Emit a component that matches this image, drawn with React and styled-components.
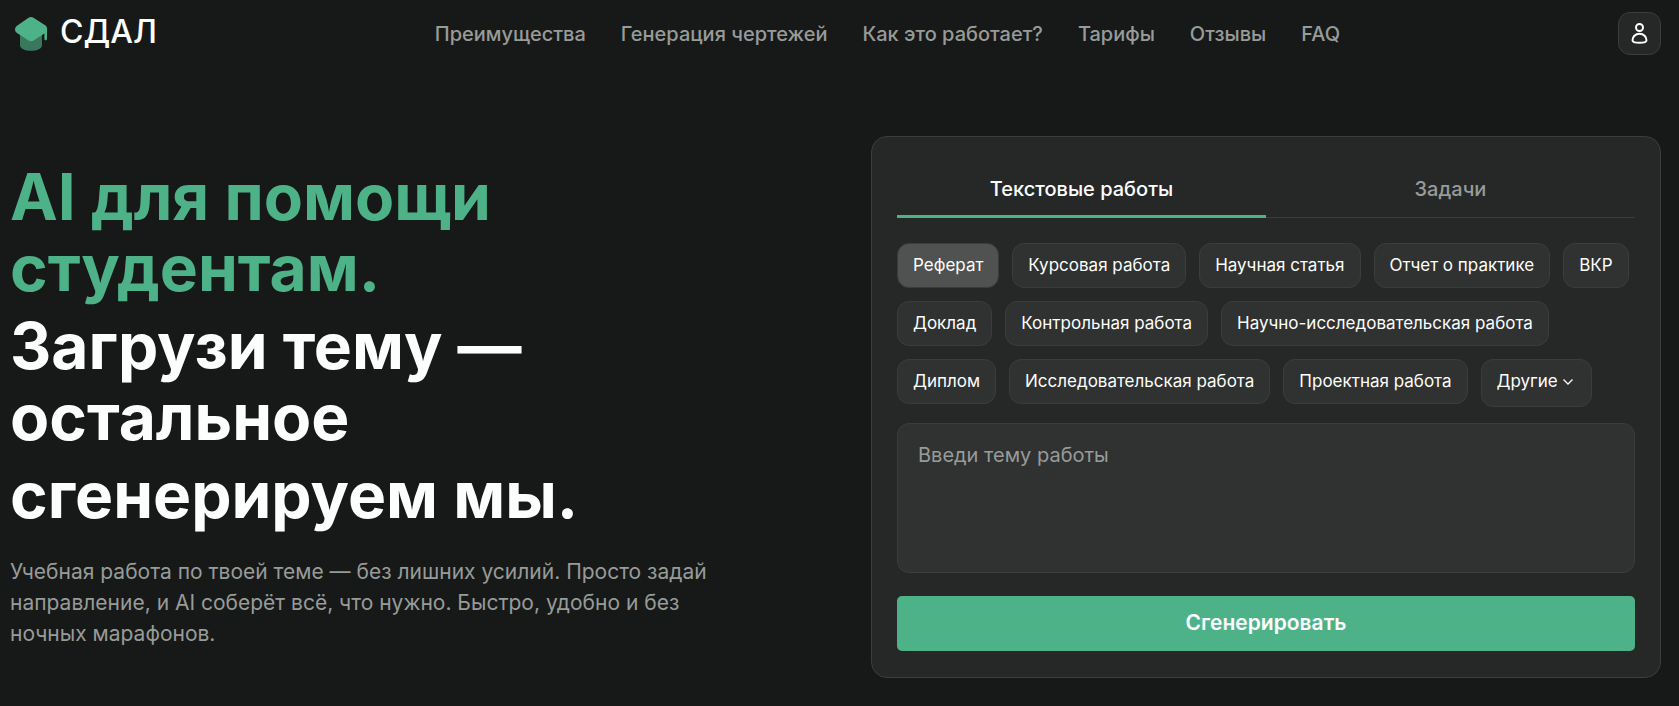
import React, { useState } from "react";
import styled, { createGlobalStyle } from "styled-components";

const GlobalStyle = createGlobalStyle`
  :root {
    --bg: #171918;
    --card: #262827;
    --control: #303231;
    --control-active: #505251;
    --border: #3b3d3c;
    --accent: #4eb289;
    --white: #fcfdfd;
    --muted: #979b99;
  }

  * {
    box-sizing: border-box;
  }

  body {
    margin: 0;
    background: var(--bg);
    color: var(--white);
    font-family: Inter, "Noto Sans", sans-serif;
  }

  button,
  select,
  textarea {
    font-family: inherit;
    color: inherit;
  }
`;

const Page = styled.div`
  padding: 12px 18px 27px 10px;
`;

const Header = styled.header`
  display: flex;
  align-items: center;
  justify-content: space-between;
`;

const Logo = styled.a`
  display: flex;
  align-items: center;
  column-gap: 12px;
  height: 43px;
  padding-left: 5px;
  color: var(--white);
  text-decoration: none;
`;

const LogoName = styled.span`
  align-self: flex-start;
  font-size: 32px;
  font-weight: 500;
  line-height: 40px;
`;

const Nav = styled.nav`
  display: flex;
  column-gap: 35px;
`;

const NavLink = styled.a`
  color: var(--muted);
  font-size: 20px;
  font-weight: 500;
  line-height: 24px;
  text-decoration: none;
`;

const ProfileButton = styled.button`
  display: flex;
  align-items: center;
  justify-content: center;
  width: 43px;
  height: 43px;
  padding: 0;
  border: 1px solid var(--border);
  border-radius: 12px;
  background: var(--card);
  cursor: pointer;
`;

const Hero = styled.main`
  display: grid;
  grid-template-columns: 1fr 790px;
  column-gap: 120px;
  align-items: center;
  padding-top: 81px;

  @media only screen and (max-width: 1200px) {
    grid-template-columns: 1fr;
    row-gap: 40px;
  }
`;

const Intro = styled.section`
  display: flex;
  flex-direction: column;
  row-gap: 26px;
  padding-bottom: 4px;
`;

const Heading = styled.h1`
  display: flex;
  flex-direction: column;
  row-gap: 7px;
  max-width: 600px;
  margin: 0;
  font-size: 64px;
  font-weight: 700;
  line-height: 71px;
`;

const HeadingPart = styled.span`
  color: ${({ $accent }) => ($accent ? "var(--accent)" : "inherit")};
`;

const Lead = styled.p`
  max-width: 730px;
  margin: 0;
  color: var(--muted);
  font-size: 21px;
  line-height: 31px;
`;

const Card = styled.form`
  display: flex;
  flex-direction: column;
  padding: 25px 25px 26px;
  border: 1px solid var(--border);
  border-radius: 16px;
  background: var(--card);
`;

const Tabs = styled.div`
  display: flex;
  margin-bottom: 25px;
  box-shadow: inset 0 -1px var(--border);
`;

const Tab = styled.button`
  flex: 1;
  height: 56px;
  padding: 0 0 2px;
  border: 0;
  border-radius: 2px 2px 0 0;
  background: none;
  box-shadow: ${({ $active }) =>
    $active ? "inset 0 -3px var(--accent)" : "none"};
  color: ${({ $active }) => ($active ? "var(--white)" : "var(--muted)")};
  font-size: 20px;
  font-weight: 500;
  cursor: pointer;
`;

const Chips = styled.div`
  display: flex;
  flex-wrap: wrap;
  align-items: flex-start;
  gap: 13px;
  margin-bottom: 16px;
`;

const Chip = styled.button`
  height: 45px;
  padding: 0 15px 2px;
  border: 1px solid var(--border);
  border-radius: 12px;
  background: ${({ $active }) =>
    $active ? "var(--control-active)" : "var(--control)"};
  font-size: 17px;
  white-space: nowrap;
  cursor: pointer;
`;

const ChipSelect = styled.label`
  display: flex;
  align-items: center;
  column-gap: 3px;
  height: 48px;
  padding: 0 17px 4px 15px;
  border: 1px solid var(--border);
  border-radius: 12px;
  background: var(--control);

  select {
    appearance: none;
    padding: 0;
    border: 0;
    background: none;
    font-size: 17px;
    cursor: pointer;
  }
`;

const Topic = styled.textarea`
  height: 150px;
  margin-bottom: 23px;
  padding: 19px 20px;
  border: 1px solid var(--border);
  border-radius: 12px;
  background: var(--control);
  font-size: 20px;
  line-height: 24px;
  resize: none;

  &::placeholder {
    color: var(--muted);
    opacity: 1;
  }
`;

const Submit = styled.button`
  height: 55px;
  padding: 0 0 2px;
  border: 0;
  border-radius: 5px;
  background: var(--accent);
  font-size: 21px;
  font-weight: 600;
  cursor: pointer;
`;

const links = [
  "Преимущества",
  "Генерация чертежей",
  "Как это работает?",
  "Тарифы",
  "Отзывы",
  "FAQ",
];

const tabs = ["Текстовые работы", "Задачи"];

const workTypes = [
  "Реферат",
  "Курсовая работа",
  "Научная статья",
  "Отчет о практике",
  "ВКР",
  "Доклад",
  "Контрольная работа",
  "Научно-исследовательская работа",
  "Диплом",
  "Исследовательская работа",
  "Проектная работа",
];

function CapIcon() {
  return (
    <svg width="33" height="35" viewBox="0 -1 33 35" aria-hidden="true">
      <path
        d="M5 17h22v11.500c0 3-5 5.300-11 5.300S5 31.500 5 28.500Z"
        fill="#39785d"
      />
      <path
        d="M13.500.8c1.600-1 3.400-1 5 0l12 7.700c1.200.8 1.500 1.800 1.500 3.500v10c0 1.800-2.600 1.800-2.600 0v-5.500l-10.900 7c-1.600 1-3.400 1-5 0L2 16c-2.600-1.800-2.600-5.400 0-7.200Z"
        fill="#4eb289"
      />
    </svg>
  );
}

function UserIcon() {
  return (
    <svg
      width="17"
      height="21"
      viewBox="0 0 17 21"
      fill="none"
      stroke="#fcfdfd"
      strokeWidth="2"
      aria-hidden="true"
    >
      <circle cx="8.500" cy="4.500" r="3.500" />
      <path d="M8.500 10.700c4.300 0 7 3.300 7 6.500 0 1.600-2.800 2.500-7 2.500s-7-.9-7-2.500c0-3.200 2.700-6.500 7-6.500Z" />
    </svg>
  );
}

function ChevronIcon() {
  return (
    <svg width="12" height="12" viewBox="0 0 12 12" fill="none" aria-hidden="true">
      <path d="m1.500 4.500 4.500 4.500 4.500-4.500" stroke="#fcfdfd" strokeWidth="1.300" />
    </svg>
  );
}

function GeneratorCard() {
  const [tab, setTab] = useState(tabs[0]);
  const [workType, setWorkType] = useState(workTypes[0]);

  return (
    <Card onSubmit={(e) => e.preventDefault()}>
      <Tabs role="tablist">
        {tabs.map((name) => (
          <Tab
            key={name}
            type="button"
            role="tab"
            aria-selected={tab === name}
            $active={tab === name}
            onClick={() => setTab(name)}
          >
            {name}
          </Tab>
        ))}
      </Tabs>
      <Chips>
        {workTypes.map((name) => (
          <Chip
            key={name}
            type="button"
            aria-pressed={workType === name}
            $active={workType === name}
            onClick={() => setWorkType(name)}
          >
            {name}
          </Chip>
        ))}
        <ChipSelect>
          <select aria-label="Другие">
            <option>Другие</option>
          </select>
          <ChevronIcon />
        </ChipSelect>
      </Chips>
      <Topic aria-label="Введи тему работы" placeholder="Введи тему работы" />
      <Submit type="submit">Сгенерировать</Submit>
    </Card>
  );
}

function App() {
  return (
    <>
      <GlobalStyle />
      <Page>
        <Header>
          <Logo href="#">
            <CapIcon />
            <LogoName>СДАЛ</LogoName>
          </Logo>
          <Nav>
            {links.map((link) => (
              <NavLink key={link} href="#">
                {link}
              </NavLink>
            ))}
          </Nav>
          <ProfileButton type="button" aria-label="Профиль">
            <UserIcon />
          </ProfileButton>
        </Header>
        <Hero>
          <Intro>
            <Heading>
              <HeadingPart $accent>AI для помощи студентам.</HeadingPart>
              <HeadingPart>Загрузи тему — остальное</HeadingPart>
              <HeadingPart>сгенерируем мы.</HeadingPart>
            </Heading>
            <Lead>
              Учебная работа по твоей теме — без лишних усилий. Просто задай
              направление, и AI соберёт всё, что нужно. Быстро, удобно и без
              ночных марафонов.
            </Lead>
          </Intro>
          <GeneratorCard />
        </Hero>
      </Page>
    </>
  );
}

export default App;
